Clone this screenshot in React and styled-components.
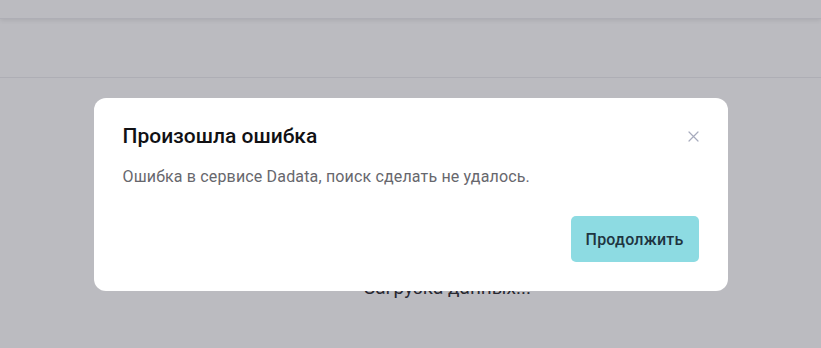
import React from 'react'
import styled, { createGlobalStyle } from 'styled-components'

const GlobalStyle = createGlobalStyle`
  html, body {
    margin: 0;
    padding: 0;
    background: #ffffff;
    font-family: Roboto, 'Noto Sans', Arial, sans-serif;
  }`

const Page = styled.div`
  width: 821px;
  height: 348px;
  display: flex;
  flex-direction: column;
  background: #ffffff;`
  const TopBar = styled.div`
    height: 18px;
    flex-shrink: 0;
    box-shadow: 0 2px 4px rgba(0, 0, 0, 0.08);
    border-bottom: 1px solid #ececef;`
  const ToolBar = styled.div`
    height: 58px;
    flex-shrink: 0;
    border-bottom: 1px solid #ececef;`
  const Content = styled.div`
    flex: 1;
    display: flex;
    justify-content: center;
    padding-top: 198px;
    padding-left: 74px;`
    const Loading = styled.span`
      font-size: 19px;
      color: #2e2e34;
      line-height: 24px;`

const Overlay = styled.div`
  position: fixed;
  inset: 0;
  background: rgba(30, 30, 45, 0.3);
  display: flex;
  justify-content: center;
  align-items: flex-start;
  padding-top: 98px;`
  const Modal = styled.div`
    width: 634px;
    box-sizing: border-box;
    background: #ffffff;
    border-radius: 12px;
    padding: 25px 29px 29px 29px;
    position: relative;`
    const Title = styled.h3`
      margin: 0;
      font-size: 21px;
      line-height: 26px;
      font-weight: 500;
      color: #111114;`
    const Text = styled.p`
      margin: 17px 0 0;
      font-size: 16px;
      line-height: 22px;
      letter-spacing: 0.16px;
      color: #67676d;`
    const Footer = styled.div`
      display: flex;
      justify-content: flex-end;
      margin-top: 28px;`
    const Button = styled.button`
      border: none;
      width: 128px;
      height: 46px;
      border-radius: 5px;
      background: #8ddbe2;
      color: #1e3440;
      font-family: Roboto, 'Noto Sans', Arial, sans-serif;
      font-size: 16px;
      font-weight: 500;
      letter-spacing: 0.2px;
      cursor: pointer;`
    const Close = styled.button`
      position: absolute;
      top: 31px;
      right: 27px;
      width: 14px;
      height: 14px;
      padding: 0;
      border: none;
      background: none;
      display: flex;
      align-items: center;
      justify-content: center;`

const CloseIcon = () => <svg width="11" height="11" viewBox="0 0 11 11">
  <path d="M1 1L10 10M10 1L1 10" stroke="#a7abbd" strokeWidth="1.2" strokeLinecap="round" />
</svg>

const App = () => <>
  <GlobalStyle />
  <Page>
    <TopBar />
    <ToolBar />
    <Content>
      <Loading>Загрузка данных...</Loading>
    </Content>
  </Page>
  <Overlay>
    <Modal>
      <Close type="button" aria-label="Закрыть"><CloseIcon /></Close>
      <Title>Произошла ошибка</Title>
      <Text>Ошибка в сервисе Dadata, поиск сделать не удалось.</Text>
      <Footer>
        <Button type="button">Продолжить</Button>
      </Footer>
    </Modal>
  </Overlay>
</>

export default App
